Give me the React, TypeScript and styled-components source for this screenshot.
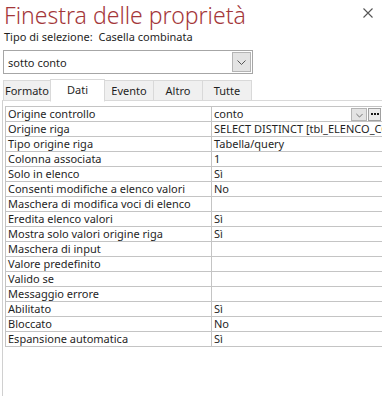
import React from 'react';
import styled, { createGlobalStyle } from 'styled-components';

const Global = createGlobalStyle`
  html, body { margin: 0; padding: 0; background: #ffffff; }
  body {
    font-family: "Noto Sans", "Open Sans", sans-serif;
    font-size: 11px;
    color: #1f1f1f;
    overflow: hidden;
  }
`;

const Window = styled.div`
  width: 382px;
  height: 396px;
  display: flex;
  flex-direction: column;
  overflow: hidden;
  background: #fff;
`;

const TitleRow = styled.div`
  display: flex;
  justify-content: space-between;
  align-items: flex-start;
  height: 30px;
  box-sizing: border-box;
  padding: 2px 8px 0 4px;
`;

const Title = styled.h1`
  margin: 0;
  font-family: "Noto Sans", "Open Sans", sans-serif;
  font-weight: 300;
  font-size: 23px;
  line-height: 26px;
  color: #a4373a;
  white-space: nowrap;
`;

const Close = styled.button`
  border: none;
  background: transparent;
  padding: 0;
  width: 12px;
  height: 12px;
  display: flex;
  align-items: center;
  justify-content: center;
  margin-top: 5px;
`;

const Subtitle = styled.div`
  padding-left: 4px;
  line-height: 14px;
  height: 14px;
  white-space: pre;
`;

const Combo = styled.div`
  margin: 6px 0 0 3px;
  width: 250px;
  height: 24px;
  box-sizing: border-box;
  border: 1px solid #a6a6a6;
  display: flex;
  align-items: center;
  justify-content: space-between;
  padding: 0 1px 0 4px;
`;

const DropButton = styled.span<{ $small?: boolean }>`
  box-sizing: border-box;
  width: ${p => (p.$small ? 16 : 19)}px;
  height: ${p => (p.$small ? 13 : 20)}px;
  background: #e3e3e3;
  border: 1px solid #b4b4b4;
  display: flex;
  align-items: ${p => (p.$small ? 'flex-end' : 'center')};
  padding-bottom: ${p => (p.$small ? '2px' : '0')};
  justify-content: center;
`;

const DotsButton = styled.span`
  box-sizing: border-box;
  width: 13px;
  height: 13px;
  background: #ececec;
  border: 1px solid #a0a0a0;
  display: flex;
  align-items: center;
  justify-content: center;
  gap: 1px;
`;

const Dot = styled.i`
  width: 2px;
  height: 2px;
  background: #1a1a1a;
`;

const TabStrip = styled.div`
  display: flex;
  align-items: flex-end;
  height: 23px;
  margin-top: 4px;
  padding-left: 3px;
  position: relative;
  z-index: 1;
`;

const Tab = styled.div<{ $active?: boolean; $w: number }>`
  box-sizing: border-box;
  width: ${p => p.$w}px;
  height: ${p => (p.$active ? 23 : 21)}px;
  margin-left: -1px;
  border: 1px solid #d9d9d9;
  border-bottom: ${p => (p.$active ? '1px solid #ffffff' : '1px solid #d9d9d9')};
  background: ${p => (p.$active ? '#ffffff' : '#f0f0f0')};
  display: flex;
  justify-content: center;
  align-items: ${p => (p.$active ? 'flex-start' : 'center')};
  padding-top: ${p => (p.$active ? '3px' : '0')};
  line-height: 14px;
  margin-bottom: ${p => (p.$active ? '-1px' : '0')};
  &:first-child { margin-left: 0; }
`;

const Panel = styled.div`
  flex: 1;
  margin-left: 2px;
  margin-top: -1px;
  border-top: 1px solid #d9d9d9;
  border-left: 1px solid #d0d0d0;
  padding: 5px 0 0 2px;
  overflow: hidden;
`;

const Grid = styled.div`
  display: grid;
  grid-template-columns: 206px 400px;
  border-left: 1px solid #c4c4c4;
  border-top: 1px solid #c4c4c4;
`;

const Cell = styled.div<{ $value?: boolean }>`
  box-sizing: border-box;
  height: 15px;
  line-height: 14px;
  border-bottom: 1px solid #c4c4c4;
  border-right: ${p => (p.$value ? 'none' : '1px solid #c4c4c4')};
  padding-left: 2px;
  white-space: nowrap;
  overflow: hidden;
  display: flex;
  align-items: center;
`;

const ValueText = styled.span`
  flex: 0 0 auto;
`;

const Controls = styled.span`
  display: flex;
  gap: 1px;
  margin-left: auto;
  margin-right: 231px;
  align-items: center;
`;

const Chevron = ({ w = 9 }: { w?: number }) => (
  <svg width={w} height="5" viewBox="0 0 9 5">
    <polyline points="0.5,0.5 4.5,4.5 8.5,0.5" fill="none" stroke="#555" strokeWidth="1" />
  </svg>
);

const rows: [string, string][] = [
  ['Origine controllo', 'conto'],
  ['Origine riga', 'SELECT DISTINCT [tbl_ELENCO_CONTI].[conto] FROM tbl_ELENCO_CONTI;'],
  ['Tipo origine riga', 'Tabella/query'],
  ['Colonna associata', '1'],
  ['Solo in elenco', 'Sì'],
  ['Consenti modifiche a elenco valori', 'No'],
  ['Maschera di modifica voci di elenco', ''],
  ['Eredita elenco valori', 'Sì'],
  ['Mostra solo valori origine riga', 'Sì'],
  ['Maschera di input', ''],
  ['Valore predefinito', ''],
  ['Valido se', ''],
  ['Messaggio errore', ''],
  ['Abilitato', 'Sì'],
  ['Bloccato', 'No'],
  ['Espansione automatica', 'Sì'],
];

const tabs: [string, number][] = [
  ['Formato', 48],
  ['Dati', 55],
  ['Evento', 50],
  ['Altro', 50],
  ['Tutte', 50],
];

export default function App() {
  return (
    <Window>
      <Global />
      <TitleRow>
        <Title>Finestra delle proprietà</Title>
        <Close aria-label="Chiudi">
          <svg width="10" height="10" viewBox="0 0 10 10">
            <path d="M0.5 0.5 L9.5 9.5 M9.5 0.5 L0.5 9.5" stroke="#555" strokeWidth="1.1" fill="none" />
          </svg>
        </Close>
      </TitleRow>
      <Subtitle>{'Tipo di selezione:  Casella combinata'}</Subtitle>
      <Combo>
        <span>sotto conto</span>
        <DropButton>
          <Chevron />
        </DropButton>
      </Combo>
      <TabStrip>
        {tabs.map(([t, w]) => (
          <Tab key={t} $w={w} $active={t === 'Dati'}>
            {t}
          </Tab>
        ))}
      </TabStrip>
      <Panel>
        <Grid>
          {rows.map(([label, value], i) => (
            <React.Fragment key={label}>
              <Cell>{label}</Cell>
              <Cell $value>
                <ValueText>{value}</ValueText>
                {i === 0 && (
                  <Controls>
                    <DropButton $small>
                      <Chevron w={7} />
                    </DropButton>
                    <DotsButton>
                      <Dot />
                      <Dot />
                      <Dot />
                    </DotsButton>
                  </Controls>
                )}
              </Cell>
            </React.Fragment>
          ))}
        </Grid>
      </Panel>
    </Window>
  );
}
